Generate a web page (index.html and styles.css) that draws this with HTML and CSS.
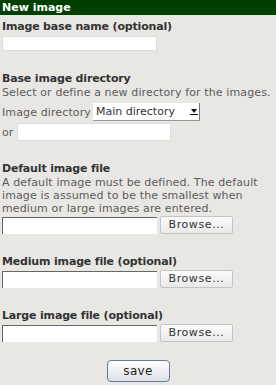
FILE: index.html
```html
<!DOCTYPE html>
<html lang="en">
<head>
    <meta charset="UTF-8">
    <title>New image</title>
    <link rel="stylesheet" href="styles.css">
</head>
<body>

<div class="panel">
    <h1>New image</h1>
    <form class="image-form">
        <div class="field first">
            <label class="title" for="basename">Image base name (optional)</label>
            <input type="text" id="basename" class="text-input">
        </div>

        <div class="field">
            <div class="title">Base image directory</div>
            <p class="help">Select or define a new directory for the images.</p>
            <div class="row">
                <label for="dir">Image directory</label>
                <span class="select" id="dir">Main directory<span class="arrow"></span></span>
            </div>
            <div class="row or-row">
                <label for="newdir">or</label>
                <input type="text" id="newdir" class="text-input">
            </div>
        </div>

        <div class="field">
            <div class="title">Default image file</div>
            <p class="help">A default image must be defined. The default image is assumed to be the smallest when medium or large images are entered.</p>
            <div class="file"><span class="file-box"></span><span class="browse">Browse...</span></div>
        </div>

        <div class="field">
            <div class="title short">Medium image file (optional)</div>
            <div class="file"><span class="file-box"></span><span class="browse">Browse...</span></div>
        </div>

        <div class="field">
            <div class="title short">Large image file (optional)</div>
            <div class="file"><span class="file-box"></span><span class="browse">Browse...</span></div>
        </div>

        <div class="actions">
            <button type="button" class="save">save</button>
        </div>
    </form>
</div>

</body>
</html>
```

FILE: styles.css
```css
body {
    margin: 0;
    background-color: #e8e7e3;
    font-family: "DejaVu Sans", sans-serif;
    font-size: 11px;
    color: #5c5c5c;
    letter-spacing: 0.12px;
}
h1 {
    margin: 0;
    background-color: #003f00;
    color: #fff;
    font-size: 11px;
    font-weight: bold;
    line-height: 15px;
    padding: 0 2px;
    letter-spacing: 0;
}
.image-form {
    padding: 0 2px;
}
.field {
    margin-top: 21px;
}
.field.first {
    margin-top: 5px;
}
.title {
    display: block;
    font-weight: bold;
    color: #333;
    line-height: 13px;
    margin-bottom: 3px;
    letter-spacing: -0.17px;
}
.title.short {
    margin-bottom: 2px;
}
.help {
    margin: -2px 0 1px;
    line-height: 13px;
}
.text-input {
    display: block;
    box-sizing: border-box;
    width: 155px;
    height: 15px;
    border: 1px solid #dcdcdc;
    background: #fff;
    margin: 0;
    padding: 0;
}
.row {
    display: flex;
    align-items: center;
    gap: 2px;
    margin-top: 4px;
}
.or-row {
    gap: 3px;
    margin-top: 2px;
}
.or-row .text-input {
    width: 154px;
    height: 18px;
}
.select {
    position: relative;
    display: block;
    width: 107px;
    height: 18px;
    line-height: 17px;
    background: #fff;
    color: #333;
    padding-left: 3px;
    box-sizing: border-box;
    border-right: 1px solid #777;
    border-bottom: 1px solid #999;
    letter-spacing: 0;
}
.arrow {
    position: absolute;
    right: 2px;
    top: 6px;
    width: 0;
    height: 0;
    border-left: 3px solid transparent;
    border-right: 3px solid transparent;
    border-top: 4px solid #111;
}
.arrow::after {
    content: "";
    position: absolute;
    left: -4px;
    top: 1px;
    width: 8px;
    height: 1px;
    background: #111;
}
.file {
    display: flex;
    align-items: center;
    gap: 3px;
}
.file-box {
    display: block;
    box-sizing: border-box;
    width: 155px;
    height: 17px;
    background: #fff;
    border-left: 1px solid #666;
    border-top: 1px solid #666;
}
.browse {
    display: block;
    box-sizing: border-box;
    width: 73px;
    height: 18px;
    line-height: 16px;
    border: 1px solid #c4c4c4;
    border-radius: 2px;
    background: linear-gradient(#fbfbfb, #e9e9e9);
    color: #333;
    text-align: center;
    letter-spacing: 0.6px;
}
.actions {
    text-align: center;
    margin-top: 18px;
}
.save {
    width: 63px;
    height: 22px;
    font-family: "DejaVu Sans", sans-serif;
    font-size: 12px;
    color: #222;
    border: 1px solid #6a7890;
    border-radius: 4px;
    background: linear-gradient(#ffffff, #dde1e8);
    padding: 0;
    letter-spacing: 0.3px;
}
```
